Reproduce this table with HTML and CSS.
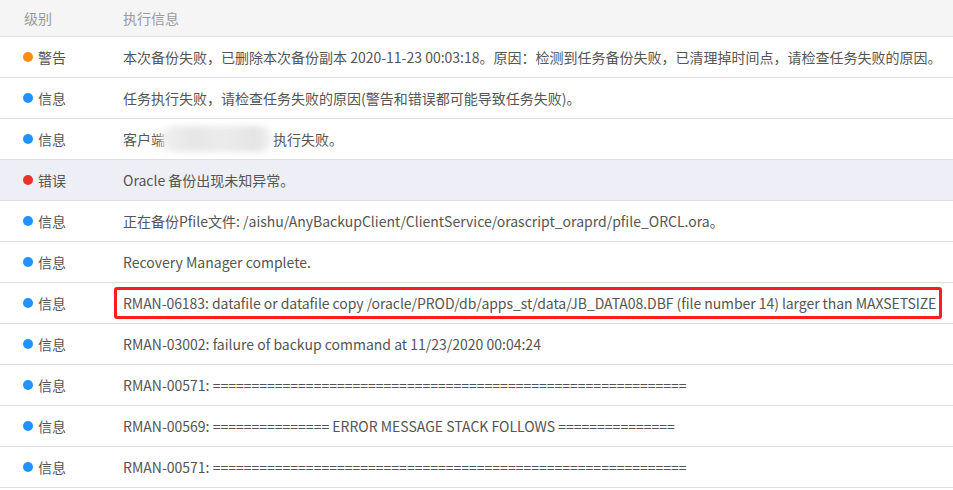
FILE: index.html
```html
<!DOCTYPE html>
<html lang="zh">
<head>
<meta charset="utf-8">
<link rel="stylesheet" href="styles.css">
</head>
<body>
<div class="table">
  <div class="row head">
    <div class="lvl">级别</div>
    <div class="msg">执行信息</div>
  </div>
  <div class="row">
    <div class="lvl"><span class="dot warn"></span>警告</div>
    <div class="msg">本次备份失败，已删除本次备份副本 2020-11-23 00:03:18。原因：检测到任务备份失败，已清理掉时间点，请检查任务失败的原因。</div>
  </div>
  <div class="row">
    <div class="lvl"><span class="dot info"></span>信息</div>
    <div class="msg">任务执行失败，请检查任务失败的原因(警告和错误都可能导致任务失败)。</div>
  </div>
  <div class="row">
    <div class="lvl"><span class="dot info"></span>信息</div>
    <div class="msg">客户端<span class="redact"></span>执行失败。</div>
  </div>
  <div class="row err">
    <div class="lvl"><span class="dot error"></span>错误</div>
    <div class="msg">Oracle 备份出现未知异常。</div>
  </div>
  <div class="row">
    <div class="lvl"><span class="dot info"></span>信息</div>
    <div class="msg">正在备份Pfile文件: /aishu/AnyBackupClient/ClientService/orascript_oraprd/pfile_ORCL.ora。</div>
  </div>
  <div class="row">
    <div class="lvl"><span class="dot info"></span>信息</div>
    <div class="msg">Recovery Manager complete.</div>
  </div>
  <div class="row">
    <div class="lvl"><span class="dot info"></span>信息</div>
    <div class="msg"><div class="mark">RMAN-06183: datafile or datafile copy /oracle/PROD/db/apps_st/data/JB_DATA08.DBF (file number 14) larger than MAXSETSIZE</div></div>
  </div>
  <div class="row">
    <div class="lvl"><span class="dot info"></span>信息</div>
    <div class="msg">RMAN-03002: failure of backup command at 11/23/2020 00:04:24</div>
  </div>
  <div class="row">
    <div class="lvl"><span class="dot info"></span>信息</div>
    <div class="msg">RMAN-00571: =============================================================</div>
  </div>
  <div class="row">
    <div class="lvl"><span class="dot info"></span>信息</div>
    <div class="msg">RMAN-00569: =============== ERROR MESSAGE STACK FOLLOWS ===============</div>
  </div>
  <div class="row">
    <div class="lvl"><span class="dot info"></span>信息</div>
    <div class="msg">RMAN-00571: =============================================================</div>
  </div>
</div>
</body>
</html>
```

FILE: styles.css
```css
html, body {
  margin: 0;
  padding: 0;
  background: #ffffff;
}
body {
  font-family: "Noto Sans CJK SC", "Noto Sans", sans-serif;
  font-size: 14px;
  color: #555555;
  overflow: hidden;
}
.table {
  display: flex;
  flex-direction: column;
}
.row {
  display: flex;
  align-items: center;
  height: 40px;
  border-bottom: 1px solid #dedede;
}
.row.head {
  height: 36px;
  background: #f5f5f5;
  color: #9a9a9a;
}
.row.err {
  background: #eeeff6;
}
.lvl {
  flex: none;
  width: 100px;
  padding-left: 23px;
  display: flex;
  align-items: center;
  white-space: nowrap;
}
.row.head .lvl {
  padding-left: 24px;
  width: 99px;
}
.msg {
  flex: 1;
  min-width: 0;
  white-space: nowrap;
  display: flex;
  align-items: center;
}
.dot {
  width: 10px;
  height: 10px;
  border-radius: 50%;
  margin-right: 5px;
  flex: none;
}
.dot.warn { background: #ff8c0f; }
.dot.info { background: #2192ff; }
.dot.error { background: #e8322a; }
.redact {
  display: inline-block;
  width: 112px;
  height: 26px;
  margin-left: -4px;
  border-radius: 13px;
  background: linear-gradient(90deg, #f0f0f0 0%, #e6e6e6 30%, #ececec 55%, #e4e4e4 85%, #f4f4f4 100%);
  filter: blur(3px);
}
.mark {
  flex: 1;
  min-width: 0;
  overflow: hidden;
  margin: 0 11px 0 -9px;
  padding: 3px 6px;
  line-height: 20px;
  letter-spacing: -0.06px;
  border: 3px solid #ff1c1c;
  border-radius: 3px;
}
```
